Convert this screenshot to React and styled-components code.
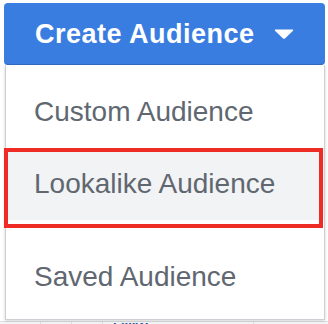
import React from 'react';
import styled, { createGlobalStyle } from 'styled-components';

const Global = createGlobalStyle`
	body {
		margin: 0;
		background: #fff;
		font-family: "Liberation Sans", Arial, sans-serif;
	}
`;

const Page = styled.div`
	width: 328px;
	height: 324px;
	overflow: hidden;
	padding: 3px 0 0 4px;
	box-sizing: border-box;
	position: relative;
`;

const Button = styled.button`
	display: flex;
	align-items: center;
	width: 321px;
	height: 62px;
	padding: 0 0 0 31px;
	border: none;
	border-radius: 4px;
	background: #3a7de1;
	box-shadow: inset 0 -1px 0 rgba(0, 0, 0, 0.12);
	color: #fff;
	font-family: inherit;
	font-size: 27px;
	font-weight: 700;
	letter-spacing: 0.5px;
	cursor: pointer;
	svg {
		margin-left: 19px;
	}
`;

const Menu = styled.ul`
	list-style: none;
	margin: 0 0 0 1px;
	padding: 11px 0 6px;
	width: 320px;
	box-sizing: border-box;
	background: #fff;
	border: 1px solid #ccd0d5;
	border-top: none;
	box-shadow: 0 1px 3px rgba(0, 0, 0, 0.18);
	position: relative;
	z-index: 1;
`;

const Item = styled.li`
	position: relative;
	display: flex;
	align-items: center;
	height: 72px;
	padding-left: 28px;
	margin-top: ${(p) => (p.$gap ? '21px' : '0')};
	background: ${(p) => (p.$active ? '#f2f3f5' : '#fff')};
	color: #606770;
	font-size: 28px;
`;

const Highlight = styled.span`
	position: absolute;
	left: -2px;
	top: 0;
	width: 319px;
	height: 80px;
	box-sizing: border-box;
	border: 4px solid #ee2b24;
	pointer-events: none;
`;

const Backdrop = styled.div`
	display: flex;
	align-items: flex-start;
	height: 8px;
	margin: 1px 0 0 -4px;
	border-top: 1px solid #dddfe2;
	background: #f5f6f7;
	overflow: hidden;
`;

const Cell = styled.div`
	width: ${(p) => p.$w}px;
	height: 100%;
	border-right: 1px solid #dddfe2;
	color: #365899;
	font-size: 13px;
	font-weight: 700;
	line-height: 12px;
	padding-left: ${(p) => (p.$text ? '10px' : '0')};
`;

function Caret() {
	return (
		<svg width="20" height="10" viewBox="0 0 20 10">
			<path
				d="M1.5 0.5 H18.5 Q20 0.5 19 1.7 L11.2 9.2 Q10 10.2 8.8 9.2 L1 1.7 Q0 0.5 1.5 0.5 Z"
				fill="#fff"
			/>
		</svg>
	);
}

export default function App() {
	return (
		<>
			<Global />
			<Page>
				<Button>
					Create Audience
					<Caret />
				</Button>
				<Menu>
					<Item>Custom Audience</Item>
					<Item $active>
						Lookalike Audience
						<Highlight />
					</Item>
					<Item $gap>Saved Audience</Item>
				</Menu>
				<Backdrop>
					<Cell $w={40} />
					<Cell $w={30} />
					<Cell $w={30} />
					<Cell $w={140} $text>
						LIIIIW
					</Cell>
				</Backdrop>
			</Page>
		</>
	);
}
